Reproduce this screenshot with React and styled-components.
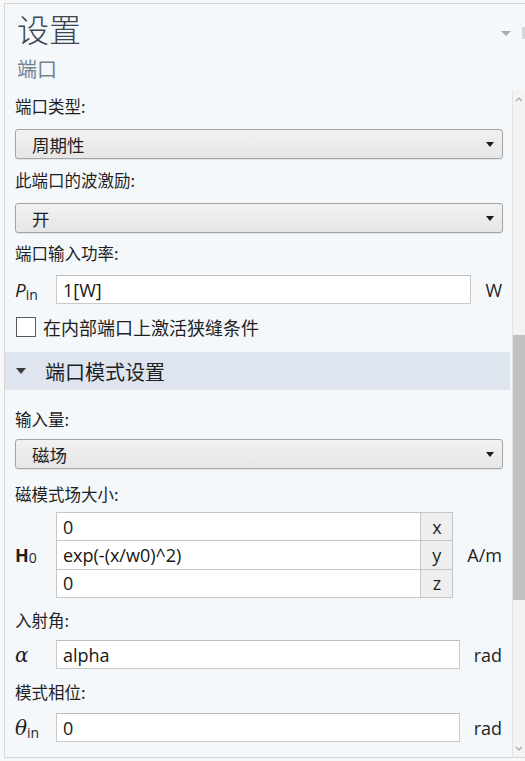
import React from "react";
import styled, { createGlobalStyle } from "styled-components";

const GlobalStyle = createGlobalStyle`
  html, body { margin: 0; padding: 0; background: #f7f7f7; }
  body { font-family: "Open Sans", "Noto Sans CJK SC", sans-serif; color: #1f1f1f; }
  * { box-sizing: border-box; }
`;

const CJK = `"Noto Sans CJK SC", "Open Sans", sans-serif`;
const LAT = `"Open Sans", "Noto Sans CJK SC", sans-serif`;

const Frame = styled.div`
  margin: 3px 0 0 4px;
  height: 755px;
  border-top: 1px solid #d3d8dd;
  border-left: 1px solid #d3d8dd;
  border-bottom: 1px solid #d3d8dd;
  background: #f4f8fb;
  display: flex;
  flex-direction: column;
`;

const Header = styled.div`
  position: relative;
  height: 86px;
  padding: 5px 0 0 12px;
`;

const Title = styled.div`
  font-family: ${CJK};
  font-size: 32px;
  line-height: 38px;
  font-weight: 300;
  color: #3a4550;
`;

const Subtitle = styled.div`
  margin-top: 10px;
  font-family: ${CJK};
  font-size: 20px;
  line-height: 24px;
  color: #75828e;
`;

const HeaderMenu = styled.div`
  position: absolute;
  top: 23px;
  right: 0;
  display: flex;
  align-items: center;
  gap: 11px;
`;

const MenuArrow = styled.div`
  width: 0;
  height: 0;
  border-left: 5px solid transparent;
  border-right: 5px solid transparent;
  border-top: 5px solid #a5abb0;
`;

const MenuSliver = styled.div`
  width: 3px;
  height: 12px;
  background: #d4d8dc;
`;

const Main = styled.div`
  flex: 1;
  min-height: 0;
  display: flex;
`;

const Content = styled.div`
  flex: 1;
  min-width: 0;
  padding: 4px 9px 0 10px;
  display: flex;
  flex-direction: column;
`;

const Label = styled.div`
  margin-top: ${(p) => p.$mt || 0}px;
  font-family: ${CJK};
  font-size: 16.5px;
  line-height: 24px;
  height: 24px;
  color: #1f1f1f;
`;

const SelectBox = styled.div`
  margin-top: ${(p) => p.$mt || 0}px;
  height: 30px;
  border: 1px solid #a4a4a4;
  border-radius: 3px;
  background: linear-gradient(#f1f1f1, #e6e6e6);
  box-shadow: 0 1px 1px rgba(0, 0, 0, 0.08);
  display: flex;
  align-items: center;
  justify-content: space-between;
  padding: 0 8px 0 16px;
  font-family: ${CJK};
  font-size: 17.5px;
  color: #1f1f1f;
`;

const SelectArrow = styled.div`
  width: 0;
  height: 0;
  border-left: 4.5px solid transparent;
  border-right: 4.5px solid transparent;
  border-top: 5px solid #1a1a1a;
`;

const QtyRow = styled.div`
  margin-top: ${(p) => p.$mt || 0}px;
  display: grid;
  grid-template-columns: 41px 1fr auto;
  align-items: center;
`;

const Symbol = styled.div`
  font-family: ${LAT};
  font-size: 19px;
  color: #1f1f1f;
  white-space: nowrap;
`;

const Ital = styled.i`
  font-family: ${(p) => (p.$serif ? `"DejaVu Serif", "Liberation Serif", serif` : LAT)};
  font-style: italic;
  font-size: ${(p) => p.$size || 19}px;
`;

const Bold = styled.b`
  font-weight: 700;
  font-size: 18px;
`;

const Sub = styled.sub`
  font-size: 14px;
  vertical-align: ${(p) => p.$drop || -3}px;
  line-height: 0;
  font-style: normal;
  font-weight: 400;
`;

const TextInput = styled.div`
  height: 29px;
  border: 1px solid #cacaca;
  border-top-color: #bdbdbd;
  background: #ffffff;
  padding: 0 6px;
  display: flex;
  align-items: center;
  font-family: ${LAT};
  font-size: 18px;
  color: #161616;
`;

const Unit = styled.div`
  padding-left: 14px;
  padding-right: 1px;
  font-family: ${LAT};
  font-size: 18px;
  color: #1f1f1f;
  text-align: right;
`;

const CheckRow = styled.label`
  margin-top: ${(p) => p.$mt || 0}px;
  height: 24px;
  display: flex;
  align-items: center;
  gap: 7px;
  padding-left: 1px;
  font-family: ${CJK};
  font-size: 18px;
  color: #1f1f1f;
`;

const Box = styled.span`
  width: 20px;
  height: 20px;
  border: 1px solid #5a5a5a;
  background: #ffffff;
  flex: none;
`;

const Band = styled.div`
  margin: ${(p) => p.$mt || 0}px -7px 0 -10px;
  height: 38px;
  background: #dee5ee;
  display: flex;
  align-items: center;
  padding-left: 11px;
  gap: 19px;
  font-family: ${CJK};
  font-size: 20px;
  color: #1f1f1f;
`;

const BandArrow = styled.div`
  width: 0;
  height: 0;
  border-left: 5px solid transparent;
  border-right: 5px solid transparent;
  border-top: 6px solid #3c3c3c;
`;

const VectorTable = styled.div`
  height: 86px;
  border: 1px solid #c6c6c6;
  background: #c6c6c6;
  display: grid;
  grid-template-columns: 1fr 31px;
  grid-template-rows: repeat(3, 1fr);
  gap: 1px;
`;

const Cell = styled.div`
  background: #ffffff;
  display: flex;
  align-items: center;
  padding-left: 6px;
  font-family: ${LAT};
  font-size: 18px;
  color: #161616;
`;

const CompCell = styled.div`
  background: #efefef;
  display: flex;
  align-items: center;
  justify-content: center;
  font-family: ${LAT};
  font-size: 18px;
  color: #1f1f1f;
`;

const Scrollbar = styled.div`
  width: 13px;
  flex: none;
  background: #f3f3f3;
  border-left: 1px solid #e4e4e4;
  display: flex;
  flex-direction: column;
  align-items: stretch;
`;

const ScrollBtn = styled.div`
  height: 18px;
  display: flex;
  align-items: center;
  justify-content: center;
`;

const Thumb = styled.div`
  margin-top: ${(p) => p.$offset}px;
  height: ${(p) => p.$size}px;
  background: #c2c2c2;
`;

const Spacer = styled.div`
  flex: 1;
`;

const Chevron = ({ up }) => (
  <svg width="8" height="5" viewBox="0 0 8 5">
    <path
      d={up ? "M1 4 L4 1 L7 4" : "M1 1 L4 4 L7 1"}
      fill="none"
      stroke="#a8a8a8"
      strokeWidth="1.2"
    />
  </svg>
);

const Select = ({ value, mt }) => (
  <SelectBox $mt={mt}>
    <span>{value}</span>
    <SelectArrow />
  </SelectBox>
);

const Quantity = ({ symbol, value, unit, mt }) => (
  <QtyRow $mt={mt}>
    <Symbol>{symbol}</Symbol>
    <TextInput>{value}</TextInput>
    <Unit>{unit}</Unit>
  </QtyRow>
);

export default function App() {
  const h0 = [
    ["0", "x"],
    ["exp(-(x/w0)^2)", "y"],
    ["0", "z"],
  ];
  return (
    <>
      <GlobalStyle />
      <Frame>
        <Header>
          <Title>设置</Title>
          <Subtitle>端口</Subtitle>
          <HeaderMenu>
            <MenuArrow />
            <MenuSliver />
          </HeaderMenu>
        </Header>
        <Main>
          <Content>
            <Label>端口类型:</Label>
            <Select mt={11} value="周期性" />
            <Label $mt={9}>此端口的波激励:</Label>
            <Select mt={11} value="开" />
            <Label $mt={8}>端口输入功率:</Label>
            <Quantity
              mt={10}
              symbol={
                <>
                  <Ital>P</Ital>
                  <Sub>in</Sub>
                </>
              }
              value="1[W]"
              unit="W"
            />
            <CheckRow $mt={11}>
              <Box />
              在内部端口上激活狭缝条件
            </CheckRow>
            <Band $mt={13}>
              <BandArrow />
              端口模式设置
            </Band>
            <Label $mt={17}>输入量:</Label>
            <Select mt={8} value="磁场" />
            <Label $mt={13}>磁模式场大小:</Label>
            <QtyRow $mt={6}>
              <Symbol>
                <Bold>H</Bold>
                <Sub $drop={-1}>0</Sub>
              </Symbol>
              <VectorTable>
                {h0.map(([v, c]) => (
                  <React.Fragment key={c}>
                    <Cell>{v}</Cell>
                    <CompCell>{c}</CompCell>
                  </React.Fragment>
                ))}
              </VectorTable>
              <Unit>A/m</Unit>
            </QtyRow>
            <Label $mt={10}>入射角:</Label>
            <Quantity
              mt={8}
              symbol={<Ital $serif $size={20}>α</Ital>}
              value="alpha"
              unit="rad"
            />
            <Label $mt={11}>模式相位:</Label>
            <Quantity
              mt={9}
              symbol={
                <>
                  <Ital $serif $size={20}>θ</Ital>
                  <Sub>in</Sub>
                </>
              }
              value="0"
              unit="rad"
            />
          </Content>
          <Scrollbar>
            <ScrollBtn>
              <Chevron up />
            </ScrollBtn>
            <Thumb $offset={227} $size={265} />
            <Spacer />
            <ScrollBtn>
              <Chevron />
            </ScrollBtn>
          </Scrollbar>
        </Main>
      </Frame>
    </>
  );
}
